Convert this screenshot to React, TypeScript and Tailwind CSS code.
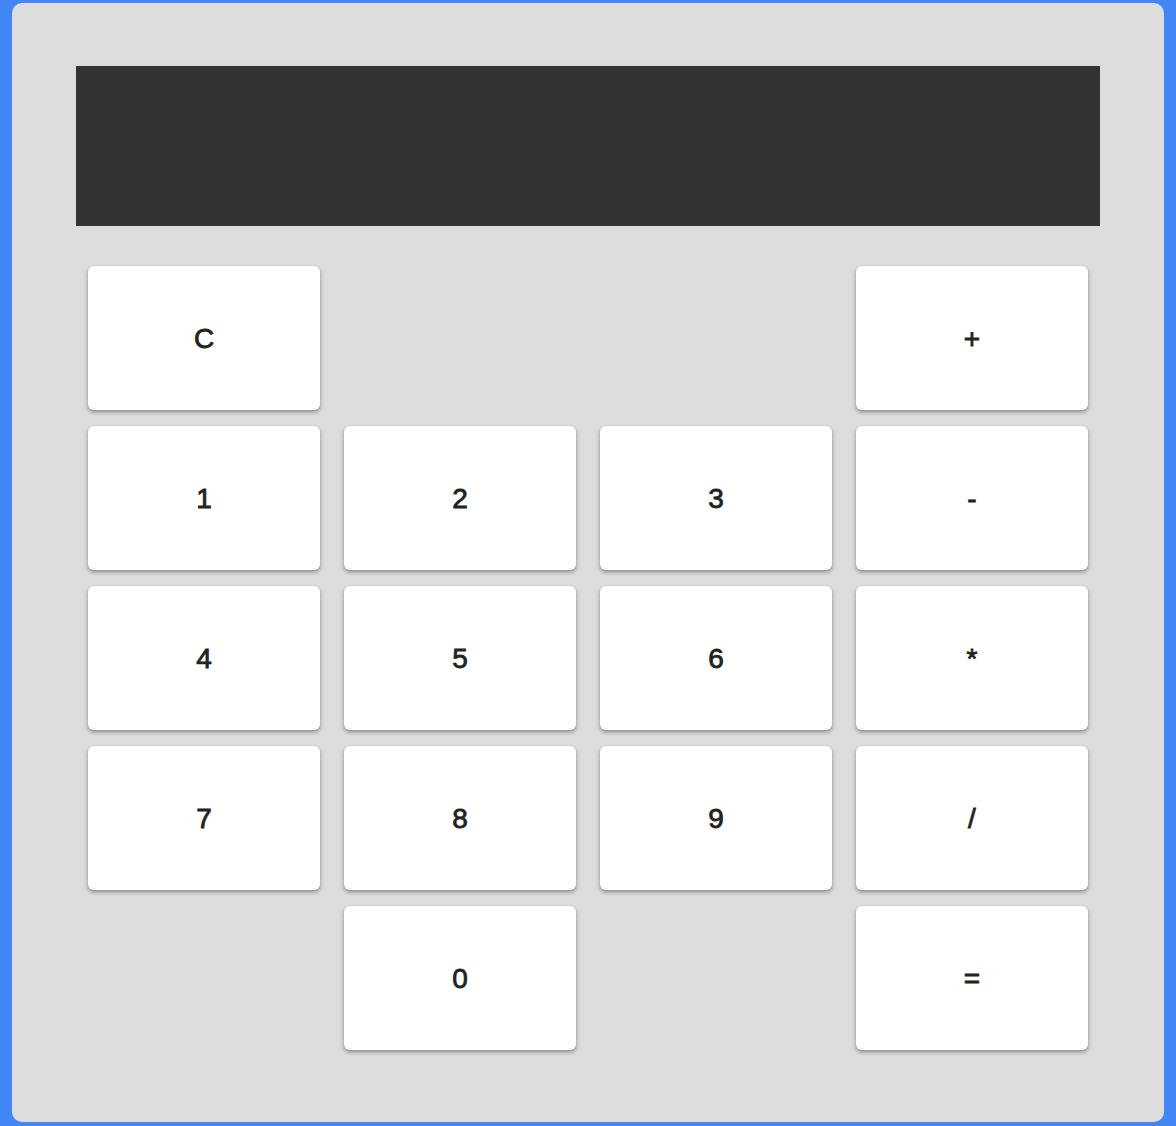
import React from "react";

const rows: (string | null)[][] = [
  ["C", null, null, "+"],
  ["1", "2", "3", "-"],
  ["4", "5", "6", "*"],
  ["7", "8", "9", "/"],
  [null, "0", null, "="],
];

export default function App() {
  return (
    <div className="min-h-[1126px] bg-[#4285f4] px-3 pt-[3px] pb-[4px]">
      <div className="rounded-[10px] bg-[#dddddd] px-16 pt-[63px] pb-[72px]">
        <div className="h-[160px] bg-[#333333]" />
        <div className="mt-10 grid grid-cols-4 gap-x-6 gap-y-4 px-3">
          {rows.flat().map((k, i) =>
            k === null ? (
              <div key={i} className="h-[144px]" />
            ) : (
              <button
                key={i}
                className="flex h-[144px] items-center justify-center rounded-md bg-white pt-[2px] text-[28px] text-[#222222] shadow-[0_2px_4px_rgba(0,0,0,0.4)] [-webkit-text-stroke:0.8px_#222222]"
                style={{ fontFamily: '"Liberation Sans", Arial, sans-serif' }}
              >
                {k}
              </button>
            )
          )}
        </div>
      </div>
    </div>
  );
}
